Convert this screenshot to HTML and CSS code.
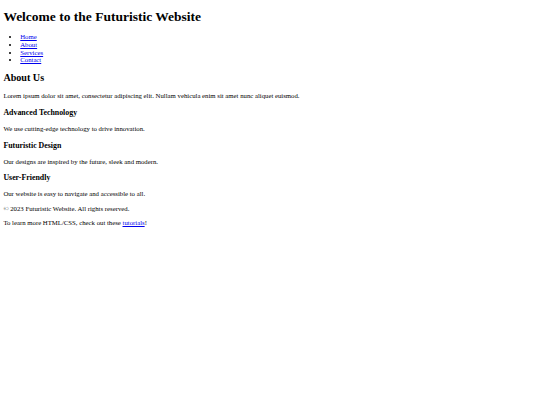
FILE: index.html
```html
<!DOCTYPE html>
<html lang="en">
<head>
<meta charset="utf-8">
<title>Futuristic Website</title>
<link rel="stylesheet" href="styles.css">
</head>
<body>
<header class="site-header">
  <h1 class="site-title">Welcome to the Futuristic Website</h1>
  <nav class="site-nav">
    <ul class="nav-list">
      <li><a href="#">Home</a></li>
      <li><a href="#">About</a></li>
      <li><a href="#">Services</a></li>
      <li><a href="#">Contact</a></li>
    </ul>
  </nav>
</header>
<main class="content">
  <section class="about">
    <h2 class="section-title">About Us</h2>
    <p class="text">Lorem ipsum dolor sit amet, consectetur adipiscing elit. Nullam vehicula enim sit amet nunc aliquet euismod.</p>
  </section>
  <section class="features">
    <div class="feature">
      <h3 class="feature-title">Advanced Technology</h3>
      <p class="text">We use cutting-edge technology to drive innovation.</p>
    </div>
    <div class="feature">
      <h3 class="feature-title">Futuristic Design</h3>
      <p class="text">Our designs are inspired by the future, sleek and modern.</p>
    </div>
    <div class="feature">
      <h3 class="feature-title">User-Friendly</h3>
      <p class="text">Our website is easy to navigate and accessible to all.</p>
    </div>
  </section>
</main>
<footer class="site-footer">
  <p class="text">&copy; 2023 Futuristic Website. All rights reserved.</p>
  <p class="text">To learn more HTML/CSS, check out these <a href="#">tutorials</a>!</p>
</footer>
</body>
</html>
```
FILE: styles.css
```css
html {
  font-size: 6.75px;
}
body {
  margin: 0 0.5em 0.5em;
  font-family: "Liberation Serif", "Times New Roman", serif;
  font-size: 1rem;
  line-height: 1.149;
  color: #000;
  background: #fff;
}
.site-title {
  font-size: 2em;
  font-weight: bold;
  margin: 8.5px 0 0.67em;
}
.nav-list {
  margin: 1em 0;
  padding-left: 2.5em;
  list-style: disc;
}
.section-title {
  font-size: 1.5em;
  font-weight: bold;
  margin: 0.83em 0;
}
.feature-title {
  font-size: 1.17em;
  font-weight: bold;
  margin: 1em 0;
}
.text {
  margin: 1em 0;
}
a {
  color: #0000ee;
  text-decoration: underline;
}
```
